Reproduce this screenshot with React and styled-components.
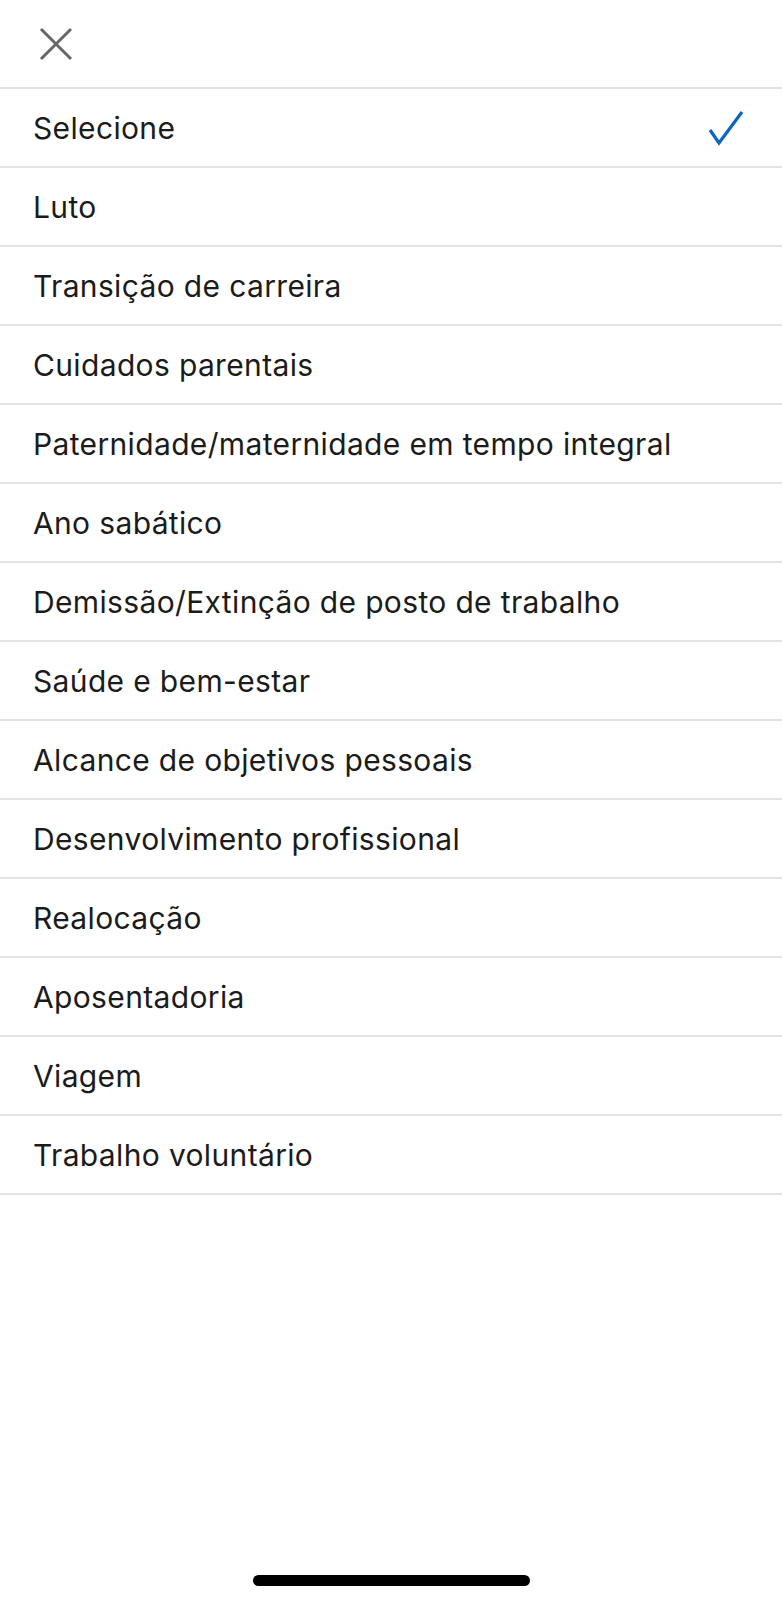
import React from 'react';
import styled, { createGlobalStyle } from 'styled-components';

const GlobalStyle = createGlobalStyle`
  html, body {
    margin: 0;
    padding: 0;
    background: #ffffff;
  }
  body {
    font-family: Inter, "Noto Sans", "Liberation Sans", sans-serif;
    -webkit-font-smoothing: antialiased;
  }
`;

const Screen = styled.div`
  width: 782px;
  min-height: 1600px;
  display: flex;
  flex-direction: column;
  background: #ffffff;
`;

const Header = styled.header`
  height: 87px;
  display: flex;
  align-items: center;
  padding-left: 37px;
  border-bottom: 2px solid #e3e3e3;
`;

const CloseButton = styled.button`
  width: 38px;
  height: 38px;
  padding: 0;
  border: none;
  background: none;
  display: flex;
  align-items: center;
  justify-content: center;
  cursor: pointer;
`;

const OptionList = styled.ul`
  list-style: none;
  margin: 0;
  padding: 0;
`;

const Option = styled.li`
  height: 77px;
  display: flex;
  align-items: center;
  justify-content: space-between;
  padding: 0 38px 0 33px;
  border-bottom: 2px solid #e3e3e3;
  font-size: 30px;
  color: #1b1b1b;
  letter-spacing: 0.35px;
`;

const Spacer = styled.div`
  flex: 1;
`;

const HomeIndicator = styled.div`
  align-self: center;
  width: 277px;
  height: 11px;
  border-radius: 6px;
  background: #000000;
  margin-bottom: 14px;
`;

const options = [
  'Selecione',
  'Luto',
  'Transição de carreira',
  'Cuidados parentais',
  'Paternidade/maternidade em tempo integral',
  'Ano sabático',
  'Demissão/Extinção de posto de trabalho',
  'Saúde e bem-estar',
  'Alcance de objetivos pessoais',
  'Desenvolvimento profissional',
  'Realocação',
  'Aposentadoria',
  'Viagem',
  'Trabalho voluntário',
];

function CloseIcon() {
  return (
    <svg width="34" height="34" viewBox="0 0 34 34">
      <path d="M2 2 L32 32 M32 2 L2 32" stroke="#666666" strokeWidth="3" strokeLinecap="butt" fill="none" />
    </svg>
  );
}

function CheckIcon() {
  return (
    <svg width="36" height="36" viewBox="0 0 36 36">
      <path d="M2 20 L11 33 L34 2" stroke="#0a66c2" strokeWidth="3.2" strokeLinejoin="miter" fill="none" />
    </svg>
  );
}

export default function App() {
  const selected = 'Selecione';

  return (
    <>
      <GlobalStyle />
      <Screen>
        <Header>
          <CloseButton aria-label="Fechar">
            <CloseIcon />
          </CloseButton>
        </Header>
        <OptionList>
          {options.map((label) => (
            <Option key={label}>
              <span>{label}</span>
              {label === selected && <CheckIcon />}
            </Option>
          ))}
        </OptionList>
        <Spacer />
        <HomeIndicator />
      </Screen>
    </>
  );
}
